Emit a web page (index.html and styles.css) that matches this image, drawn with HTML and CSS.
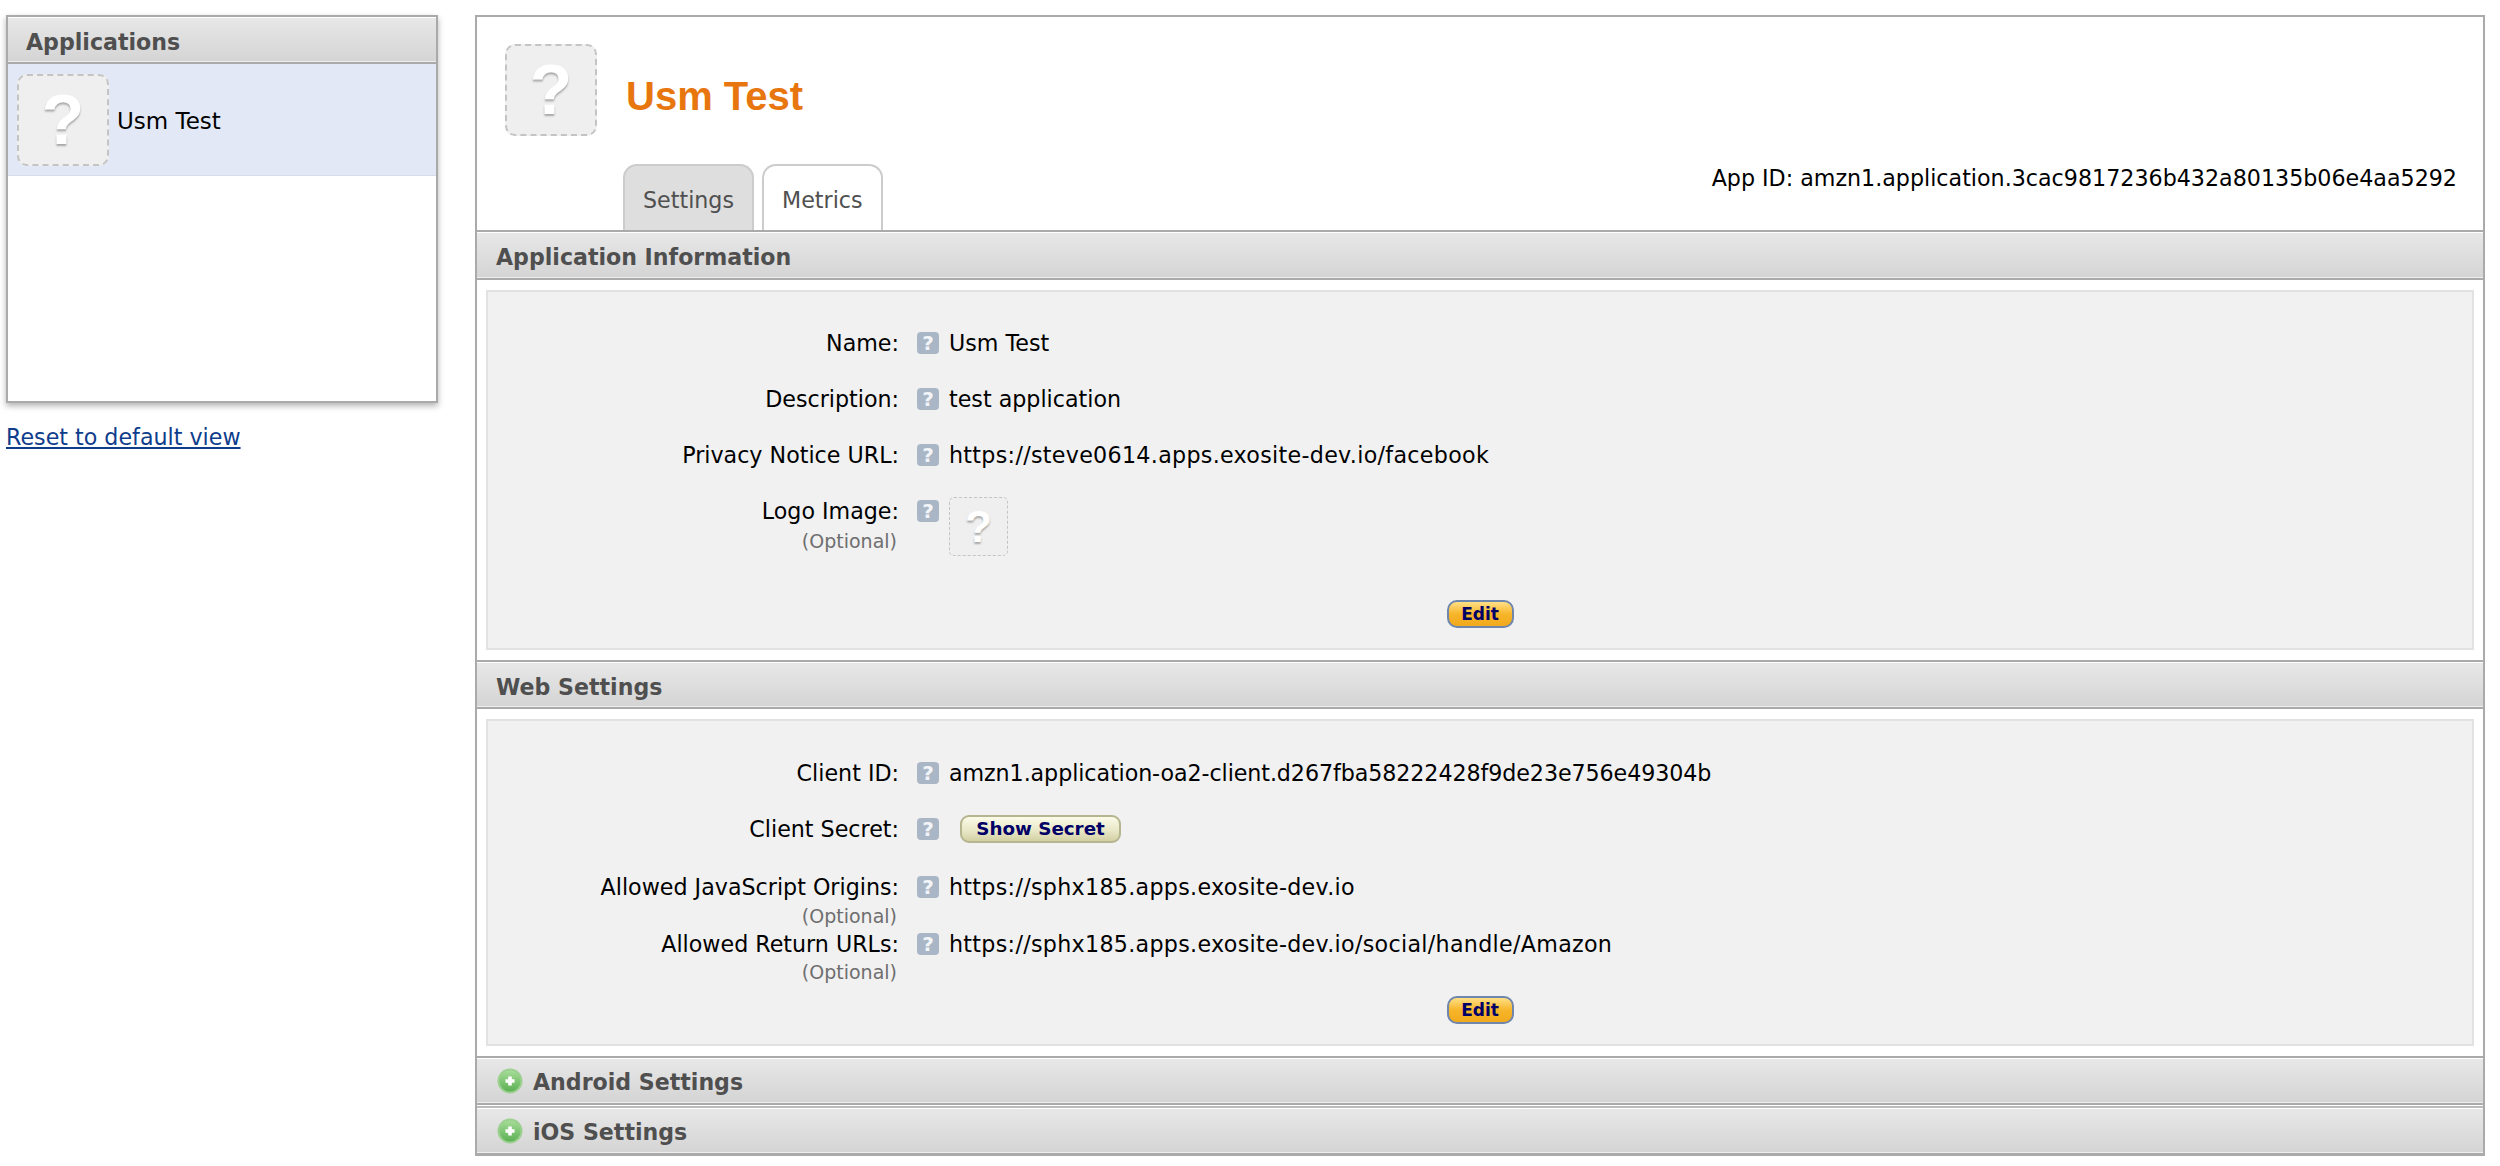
FILE: index.html
```html
<!DOCTYPE html>
<html lang="en">
<head>
  <meta charset="UTF-8">
  <title>Usm Test</title>
  <link rel="stylesheet" href="styles.css">
</head>
<body>
  <div class="page">
    <div class="sidebar">
      <div class="app_list">
        <div class="bar app_list_head"><h2>Applications</h2></div>
        <div class="app_item">
          <div class="logo logo_big"><span>?</span></div>
          <span class="app_name">Usm Test</span>
        </div>
      </div>
      <a class="reset_link" href="#">Reset to default view</a>
    </div>

    <div class="main">
      <div class="app_head">
        <div class="logo logo_big"><span>?</span></div>
        <h1>Usm Test</h1>
        <div class="tabs">
          <a class="tab tab_active" href="#">Settings</a>
          <a class="tab" href="#">Metrics</a>
        </div>
        <div class="app_id">App ID: amzn1.application.3cac9817236b432a80135b06e4aa5292</div>
      </div>

      <div class="bar"><h2>Application Information</h2></div>
      <div class="box">
        <div class="row">
          <div class="label">Name:</div><div class="help">?</div><div>Usm Test</div>
        </div>
        <div class="row">
          <div class="label">Description:</div><div class="help">?</div><div>test application</div>
        </div>
        <div class="row">
          <div class="label">Privacy Notice URL:</div><div class="help">?</div><div class="url">https://steve0614.apps.exosite-dev.io/facebook</div>
        </div>
        <div class="row row_logo">
          <div class="label">Logo Image:<small>(Optional)</small></div><div class="help">?</div>
          <div class="logo logo_small"><span>?</span></div>
        </div>
        <div class="actions"><button class="btn btn_edit">Edit</button></div>
      </div>

      <div class="bar bar_next"><h2>Web Settings</h2></div>
      <div class="box box_web">
        <div class="row">
          <div class="label">Client ID:</div><div class="help">?</div><div class="hex">amzn1.application-oa2-client.d267fba58222428f9de23e756e49304b</div>
        </div>
        <div class="row row_secret">
          <div class="label">Client Secret:</div><div class="help">?</div><div><button class="btn btn_secret">Show Secret</button></div>
        </div>
        <div class="row row_tight">
          <div class="label">Allowed JavaScript Origins:<small>(Optional)</small></div><div class="help">?</div><div class="url">https://sphx185.apps.exosite-dev.io</div>
        </div>
        <div class="row row_tight row_return">
          <div class="label">Allowed Return URLs:<small>(Optional)</small></div><div class="help">?</div><div class="url">https://sphx185.apps.exosite-dev.io/social/handle/Amazon</div>
        </div>
        <div class="actions actions_close"><button class="btn btn_edit">Edit</button></div>
      </div>

      <div class="bar bar_next bar_plus">
        <svg class="plus" viewBox="0 0 26 26"><defs><linearGradient id="pg" x1="0" y1="0" x2="0" y2="1"><stop offset="0" stop-color="#a5dc97"/><stop offset="1" stop-color="#5cb054"/></linearGradient></defs><circle cx="13" cy="13" r="12.500" fill="#9bd08f"/><circle cx="13" cy="13" r="10.500" fill="url(#pg)"/><path d="M13 8.500v9M8.500 13h9" stroke="#fff" stroke-width="3.600"/></svg>
        <h2>Android Settings</h2>
      </div>
      <div class="bar bar_plus bar_last">
        <svg class="plus" viewBox="0 0 26 26"><circle cx="13" cy="13" r="12.500" fill="#9bd08f"/><circle cx="13" cy="13" r="10.500" fill="url(#pg)"/><path d="M13 8.500v9M8.500 13h9" stroke="#fff" stroke-width="3.600"/></svg>
        <h2>iOS Settings</h2>
      </div>
    </div>
  </div>
</body>
</html>
```

FILE: styles.css
```css
html,body{
    margin:0;
    background:#fff;
    font-family:"DejaVu Sans",Verdana,sans-serif;
    font-size:22.2px;
    color:#000;
}
.page{
    display:flex;
    align-items:flex-start;
    padding:15px 0 0 6px;
}
.sidebar{
    width:432px;
    margin-right:37px;
    flex:none;
}
.app_list{
    box-sizing:border-box;
    height:388px;
    border:2px solid #aaa;
    box-shadow:0 3px 6px rgba(0,0,0,.3);
}
.app_item{
    display:flex;
    align-items:center;
    height:111px;
    padding-left:9px;
    background:#e3e8f6;
    border-bottom:1px solid #d7dce6;
}
.app_item .logo{
    margin-right:8px;
}
.app_name{
    position:relative;
    top:1px;
    font-size:23px;
}
.reset_link{
    display:inline-block;
    margin-top:21px;
    color:#0f3d8c;
}

.bar{
    display:flex;
    align-items:center;
    box-sizing:border-box;
    height:48px;
    padding:5px 0 0 19px;
    background:linear-gradient(#e8e8e8,#d4d4d4);
    border-bottom:2px solid #aaa;
    box-shadow:inset 0 -1px 0 #eee,inset 0 1px 0 #fff;
}
.bar h2{
    margin:0;
    font-size:22.100px;
    line-height:1;
    color:#4f4f4f;
}
.app_list_head{
    height:47px;
    padding-left:18px;
}
.bar_next{
    border-top:2px solid #aaa;
    height:49px;
    margin-top:10px;
}
.bar_plus{
    padding:0 0 0 20px;
}
.bar_plus h2{
    position:relative;
    top:2px;
}
.bar_last{
    height:50px;
    border-bottom-width:3px;
    margin-top:1px;
    border-top:2px solid #bbb;
}
.plus{
    width:26px;
    height:26px;
    margin-right:10px;
    flex:none;
}

.main{
    box-sizing:border-box;
    width:2010px;
    flex:none;
    border:2px solid #aaa;
    border-bottom:0;
}
.app_head{
    position:relative;
    display:flex;
    height:215px;
    box-sizing:border-box;
    border-bottom:2px solid #aaa;
    padding:27px 0 0 28px;
}
.app_head h1{
    margin:29px 0 0 29px;
    font-family:"Liberation Sans",Arial,sans-serif;
    font-size:40px;
    line-height:46px;
    color:#e8760f;
}
.tabs{
    position:absolute;
    left:146px;
    bottom:0;
    display:flex;
    gap:8px;
}
.tab{
    box-sizing:border-box;
    height:66px;
    padding:21px 18px 0;
    border:2px solid #ccc;
    border-bottom:0;
    border-radius:14px 14px 0 0;
    color:#505050;
    text-decoration:none;
}
.tab_active{
    background:#dedede;
}
.app_id{
    position:absolute;
    right:26px;
    bottom:39px;
}

.box{
    box-sizing:border-box;
    margin:10px 9px 0;
    padding:37px 0 20px;
    background:#f1f1f1;
    border:2px solid #e2e2e2;
}
.box_web{
    padding-top:38px;
}
.row{
    display:grid;
    grid-template-columns:419px 22px 1fr;
    column-gap:10px;
    padding-bottom:28px;
    line-height:28px;
}
.url{
    letter-spacing:.3px;
}
.hex{
    letter-spacing:-.08px;
}
.label{
    box-sizing:border-box;
    padding-right:8px;
    text-align:right;
}
.label small{
    display:block;
    margin-top:2px;
    padding-right:2px;
    font-size:19px;
    color:#6e6e6e;
}
.help{
    width:22px;
    height:22px;
    margin-top:3px;
    border-radius:4px;
    background:#a9b6c6;
    color:#f2f4f7;
    font-size:20px;
    font-weight:bold;
    line-height:22px;
    text-align:center;
}
.row_logo{
    padding-bottom:0;
}
.row_secret{
    padding-bottom:30px;
}
.row_tight{
    padding-bottom:0;
}
.row_tight small{
    margin-top:1px;
}
.row_return small{
    margin-top:0;
}
.actions{
    padding-top:44px;
    text-align:center;
    line-height:0;
}
.actions_close{
    padding-top:10px;
}

.logo{
    display:flex;
    align-items:center;
    justify-content:center;
    box-sizing:border-box;
    background:#efefef;
    border:2px dashed #c4c4c4;
    border-radius:10px;
    font-family:"Liberation Sans",Arial,sans-serif;
    font-weight:bold;
    color:#fff;
    text-shadow:0 2px 2px rgba(0,0,0,.3);
}
.logo_big{
    width:92px;
    height:92px;
    font-size:70px;
    flex:none;
}
.logo_small{
    width:59px;
    height:59px;
    border-width:1px;
    font-size:44px;
    border-radius:5px;
}

.btn{
    box-sizing:border-box;
    padding:0;
    height:28px;
    font-family:inherit;
    font-size:17px;
    font-weight:bold;
    line-height:24px;
    color:#000066;
    vertical-align:top;
}
.btn_edit{
    width:67px;
    border:2px solid #6f86ad;
    border-radius:10px;
    background:linear-gradient(#ffdf86,#f7b52a 50%,#f2a91c);
}
.btn_secret{
    width:161px;
    margin:0 0 0 11px;
    border:2px solid #b5b58f;
    border-radius:9px;
    background:linear-gradient(#fbfbe9,#e7e6c4 60%,#d2d0a3);
    font-size:18.300px;
}
```
